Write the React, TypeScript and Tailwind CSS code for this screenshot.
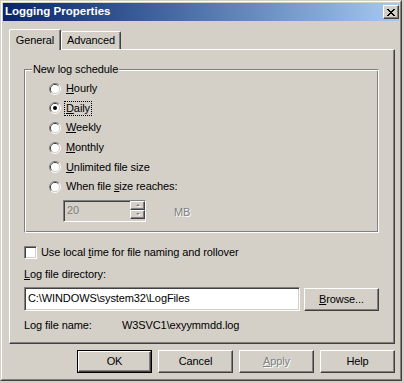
import React from "react";

const sunken =
  "border border-t-[#808080] border-l-[#808080] border-r-white border-b-white shadow-[inset_1px_1px_0_#404040,inset_-1px_-1px_0_#d4d0c8]";
const raised =
  "border border-t-white border-l-white border-r-[#404040] border-b-[#404040] shadow-[inset_-1px_-1px_0_#808080]";
const disabledText = "text-[#808080] [text-shadow:1px_1px_0_#fff]";

function Radio({ checked }: { checked?: boolean }) {
  return (
    <svg width="12" height="12" viewBox="0 0 12 12" className="shrink-0">
      <path d="M2.11 9.89A5.5 5.5 0 0 1 9.89 2.11" stroke="#808080" fill="none" />
      <path d="M9.89 2.11A5.5 5.5 0 0 1 2.11 9.89" stroke="#ffffff" fill="none" />
      <path d="M2.82 9.18A4.5 4.5 0 0 1 9.18 2.82" stroke="#404040" fill="none" />
      <path d="M9.18 2.82A4.5 4.5 0 0 1 2.82 9.18" stroke="#d4d0c8" fill="none" />
      <circle cx="6" cy="6" r="4" fill="#ffffff" />
      {checked && <circle cx="6" cy="6" r="2" fill="#000000" />}
    </svg>
  );
}

function RadioRow({
  label,
  checked,
  focused,
}: {
  label: React.ReactNode;
  checked?: boolean;
  focused?: boolean;
}) {
  return (
    <div className="flex h-[19.6px] items-center">
      <Radio checked={checked} />
      <span
        className={
          focused
            ? "ml-[3px] border border-dotted border-black px-[1px] leading-[13px]"
            : "ml-[5px] leading-[13px]"
        }
      >
        {label}
      </span>
    </div>
  );
}

function Arrow({ up }: { up?: boolean }) {
  return (
    <svg width="6" height="4" viewBox="0 0 6 4">
      {up ? (
        <>
          <path d="M3 1L5 3H1Z" fill="#ffffff" transform="translate(1 1)" />
          <path d="M3 1L5 3H1Z" fill="#808080" />
        </>
      ) : (
        <>
          <path d="M1 1H5L3 3Z" fill="#ffffff" transform="translate(1 1)" />
          <path d="M1 1H5L3 3Z" fill="#808080" />
        </>
      )}
    </svg>
  );
}

function Btn({
  children,
  def,
  disabled,
}: {
  children: React.ReactNode;
  def?: boolean;
  disabled?: boolean;
}) {
  const inner = (
    <div
      className={`flex h-full w-full items-center justify-center ${raised} ${
        disabled ? disabledText : ""
      }`}
    >
      {children}
    </div>
  );
  return def ? (
    <div className="h-[23px] w-[75px] border border-black">{inner}</div>
  ) : (
    <div className="h-[23px] w-[75px]">{inner}</div>
  );
}

export default function App() {
  return (
    <div className="h-[383px] w-[404px] bg-[#d4d0c8] font-['Liberation_Sans',Arial,sans-serif] text-[11px] tracking-[-0.1px] text-black">
      <div className="h-[381px] w-[402px] border border-t-[#d4d0c8] border-l-[#d4d0c8] border-r-[#404040] border-b-[#404040]">
        <div className="flex h-full flex-col border border-t-white border-l-white border-r-[#808080] border-b-[#808080] p-[1px]">
          {/* Title bar */}
          <div className="flex h-[18px] items-center justify-between bg-linear-to-r from-[#0a246a] to-[#a6caf0] pl-[2px] pr-0">
            <span className="text-[11.5px] font-bold tracking-normal text-white">
              Logging Properties
            </span>
            <div
              className={`flex h-[14px] w-[16px] items-center justify-center bg-[#d4d0c8] ${raised}`}
            >
              <svg width="8" height="7" viewBox="0 0 8 7" shapeRendering="crispEdges">
                <path
                  d="M0 0h2v1H0zM6 0h2v1H6zM1 1h2v1H1zM5 1h2v1H5zM2 2h4v1H2zM3 3h2v1H3zM2 4h4v1H2zM1 5h2v1H1zM5 5h2v1H5zM0 6h2v1H0zM6 6h2v1H6z"
                  fill="#000"
                />
              </svg>
            </div>
          </div>

          {/* Tabs */}
          <div className="ml-[6px] mt-[8px] flex h-[20px] items-end">
            <div className="relative z-10 -mb-[1px] flex h-[21px] w-[52px] items-start justify-center rounded-t-[2px] border-l border-t border-r border-l-white border-t-white border-r-[#404040] bg-[#d4d0c8] pt-[2px] shadow-[inset_-1px_0_0_#808080]">
              General
            </div>
            <div className="flex h-[18px] w-[60px] items-center justify-center rounded-t-[2px] border-l border-t border-r border-l-white border-t-white border-r-[#404040] shadow-[inset_-1px_0_0_#808080]">
              Advanced
            </div>
          </div>

          {/* Panel */}
          <div className="ml-[6px] flex h-[295px] w-[386px] flex-col border border-t-white border-l-white border-r-[#404040] border-b-[#404040] pl-[14px] shadow-[inset_-1px_-1px_0_#808080]">
            {/* Group box */}
            <div className="mt-[19px] flex w-[355px] flex-col border border-t-[#808080] border-l-[#808080] border-r-white border-b-white pb-[10px] shadow-[inset_1px_1px_0_#fff,inset_-1px_-1px_0_#808080]">
              <div className="-mt-[7px] ml-[7px] w-fit bg-[#d4d0c8] px-[1px] leading-[13px]">
                New log schedule
              </div>
              <div className="ml-[24px] mt-[3px] flex flex-col">
                <RadioRow label={<><u>H</u>ourly</>} />
                <RadioRow label={<><u>D</u>aily</>} checked focused />
                <RadioRow label={<><u>W</u>eekly</>} />
                <RadioRow label={<><u>M</u>onthly</>} />
                <RadioRow label={<><u>U</u>nlimited file size</>} />
                <RadioRow label={<>When file <u>s</u>ize reaches:</>} />
              </div>
              <div className="ml-[38px] mt-[3px] flex items-center">
                <div className={`flex h-[22px] w-[83px] ${sunken}`}>
                  <span className="flex-1 pl-[3px] leading-[18px] text-[#808080]">20</span>
                  <div className="flex w-[15px] flex-col">
                    <div className={`flex h-[9px] items-center justify-center bg-[#d4d0c8] ${raised}`}>
                      <Arrow up />
                    </div>
                    <div className={`flex h-[9px] items-center justify-center bg-[#d4d0c8] ${raised}`}>
                      <Arrow />
                    </div>
                  </div>
                </div>
                <span className={`ml-[28px] mt-[4px] ${disabledText}`}>MB</span>
              </div>
            </div>

            {/* Checkbox */}
            <div className="mt-[13px] flex h-[13px] items-center">
              <div className={`h-[13px] w-[13px] bg-white ${sunken}`} />
              <span className="ml-[4px] leading-[13px]">
                Use local <u>t</u>ime for file naming and rollover
              </span>
            </div>

            <div className="mt-[9px] leading-[13px]">
              <u>L</u>og file directory:
            </div>

            <div className="mt-[6px] flex w-[355px] items-start justify-between">
              <div className={`flex h-[24px] w-[276px] items-center bg-white pl-[3px] ${sunken}`}>
                C:\WINDOWS\system32\LogFiles
              </div>
              <div className="mt-[1px]">
                <Btn>
                  <span>
                    <u>B</u>rowse...
                  </span>
                </Btn>
              </div>
            </div>

            <div className="mt-[8px] flex leading-[13px]">
              <span className="w-[98px]">Log file name:</span>
              <span>W3SVC1\exyymmdd.log</span>
            </div>
          </div>

          {/* Buttons */}
          <div className="mt-[6px] flex justify-end gap-[6px] pr-[4px]">
            <Btn def>OK</Btn>
            <Btn>Cancel</Btn>
            <Btn disabled>
              <span>
                <u>A</u>pply
              </span>
            </Btn>
            <Btn>Help</Btn>
          </div>
        </div>
      </div>
    </div>
  );
}
